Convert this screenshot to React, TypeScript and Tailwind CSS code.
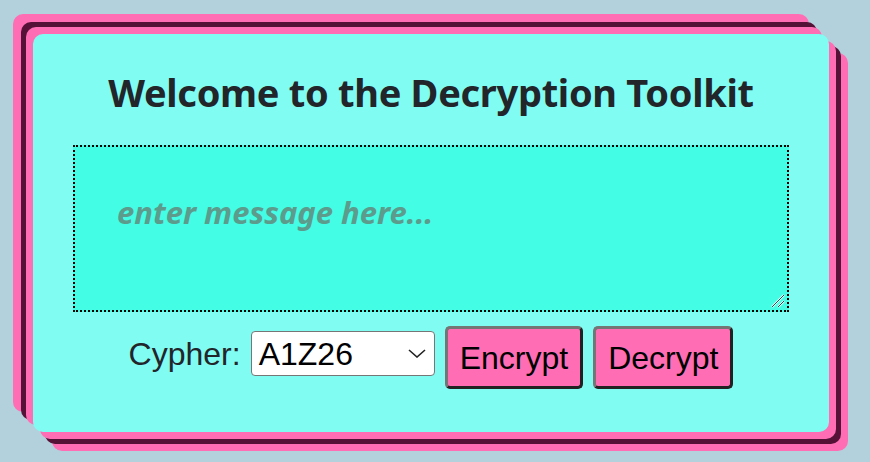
import React from "react";

const App = () => {
  return (
    <div className="w-[870px] h-[462px] bg-[#b3d1dc] overflow-hidden pt-[34px] pl-[33px]">
      {/* Card with stacked offset shadows */}
      <div className="w-[796px] h-[398px] rounded-[10px] bg-[#80fcf2] px-10 shadow-[-7px_-7px_0_#ff6eb4,7px_7px_0_#ff6eb4,-12px_-12px_0_#561236,12px_12px_0_#561236,-20px_-20px_0_#ff6eb4,19px_19px_0_#ff6eb4]">
        <h1 className="pt-[36px] text-center text-[38px] leading-[44px] font-bold text-[#22252a] font-['Noto_Sans',sans-serif] tracking-[-0.3px]">
          Welcome to the Decryption Toolkit
        </h1>

        <div className="relative mt-[31px] w-[716px] h-[167px]">
          <textarea
            className="block w-full h-full resize-none bg-[#43fde5] border-2 border-dotted border-black pl-[42px] pt-[42px] text-[31px] italic font-bold font-['Noto_Sans',sans-serif] placeholder:text-[#5d9b8c] outline-none"
            placeholder="enter message here..."
          />
          {/* resize grip */}
          <svg
            className="absolute right-[4px] bottom-[4px] pointer-events-none"
            width="14"
            height="14"
            viewBox="0 0 14 14"
          >
            <path d="M1 13L13 1M7 13L13 7" stroke="#e8fffb" strokeWidth="2.4" />
            <path d="M1 13L13 1M7 13L13 7" stroke="#1d5a55" strokeWidth="1" />
          </svg>
        </div>

        {/* Controls */}
        <div className="mt-[6px] flex items-center justify-center gap-[10px] font-['Liberation_Sans',Arial,sans-serif] text-[32px] leading-[38px] text-[#22252a]">
          <label>Cypher:</label>
          <div className="relative w-[184px] h-[45px] bg-white border border-[#767676] rounded-[4px] flex items-center pl-[7px] text-black">
            A1Z26
            <svg
              className="absolute right-[8px] top-[17px]"
              width="18"
              height="9"
              viewBox="0 0 18 9"
              fill="none"
              stroke="#222"
              strokeWidth="1.6"
            >
              <path d="M1 1l8 7 8-7" />
            </svg>
          </div>
          <button className="h-[63px] px-[12px] bg-[#ff6eb4] text-black border-[3px] border-t-[#757575] border-l-[#757575] border-r-[#222] border-b-[#222] rounded-[5px] mt-[8px]">
            Encrypt
          </button>
          <button className="h-[63px] px-[12px] bg-[#ff6eb4] text-black border-[3px] border-t-[#757575] border-l-[#757575] border-r-[#222] border-b-[#222] rounded-[5px] mt-[8px]">
            Decrypt
          </button>
        </div>
      </div>
    </div>
  );
};

export default App;
